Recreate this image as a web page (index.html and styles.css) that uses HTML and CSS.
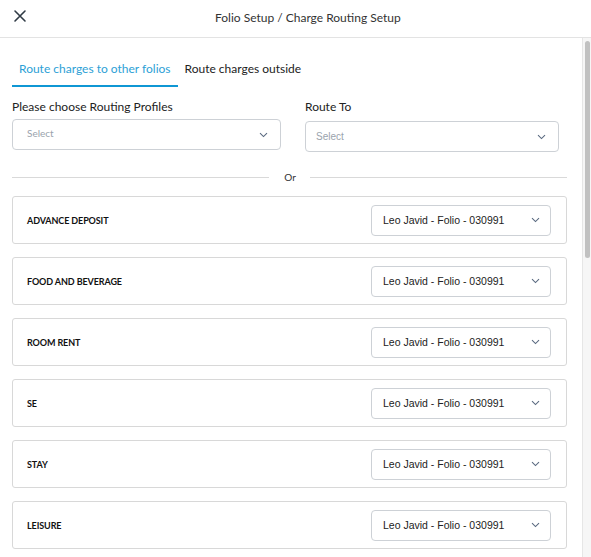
FILE: index.html
```html
<!DOCTYPE html>
<html>
<head>
<meta charset="utf-8">
<link rel="stylesheet" href="styles.css">
</head>
<body>
<div class="modal">
  <header class="header">
    <button class="close" aria-label="Close">
      <svg width="14" height="14" viewBox="0 0 14 14"><path d="M2 2 L12 12 M12 2 L2 12" stroke="#2f3a45" stroke-width="1.6" stroke-linecap="round"/></svg>
    </button>
    <div class="title">Folio Setup / Charge Routing Setup</div>
  </header>
  <div class="main">
    <main class="body">
      <nav class="tabs">
        <div class="tab active">Route charges to other folios</div>
        <div class="tab">Route charges outside</div>
      </nav>
      <div class="fields">
        <div class="field">
          <label class="label">Please choose Routing Profiles</label>
          <div class="select select-a"><span class="ph">Select</span><svg class="chev" width="9" height="6" viewBox="0 0 9 6"><path d="M1 1.2 L4.5 4.6 L8 1.2" fill="none" stroke="#5a6a80" stroke-width="1.1"/></svg></div>
        </div>
        <div class="field field-b">
          <label class="label">Route To</label>
          <div class="select select-b"><span class="ph ph-b">Select</span><svg class="chev" width="9" height="6" viewBox="0 0 9 6"><path d="M1 1.2 L4.5 4.6 L8 1.2" fill="none" stroke="#5a6a80" stroke-width="1.1"/></svg></div>
        </div>
      </div>
      <div class="or"><span class="line"></span><span class="or-text">Or</span><span class="line"></span></div>
      <div class="cards">
        <div class="card"><span class="cat">ADVANCE DEPOSIT</span><div class="folio"><span>Leo Javid - Folio - 030991</span><svg class="chev" width="9" height="6" viewBox="0 0 9 6"><path d="M1 1.2 L4.5 4.6 L8 1.2" fill="none" stroke="#5a6a80" stroke-width="1.1"/></svg></div></div>
        <div class="card"><span class="cat">FOOD AND BEVERAGE</span><div class="folio"><span>Leo Javid - Folio - 030991</span><svg class="chev" width="9" height="6" viewBox="0 0 9 6"><path d="M1 1.2 L4.5 4.6 L8 1.2" fill="none" stroke="#5a6a80" stroke-width="1.1"/></svg></div></div>
        <div class="card"><span class="cat">ROOM RENT</span><div class="folio"><span>Leo Javid - Folio - 030991</span><svg class="chev" width="9" height="6" viewBox="0 0 9 6"><path d="M1 1.2 L4.5 4.6 L8 1.2" fill="none" stroke="#5a6a80" stroke-width="1.1"/></svg></div></div>
        <div class="card"><span class="cat">SE</span><div class="folio"><span>Leo Javid - Folio - 030991</span><svg class="chev" width="9" height="6" viewBox="0 0 9 6"><path d="M1 1.2 L4.5 4.6 L8 1.2" fill="none" stroke="#5a6a80" stroke-width="1.1"/></svg></div></div>
        <div class="card"><span class="cat">STAY</span><div class="folio"><span>Leo Javid - Folio - 030991</span><svg class="chev" width="9" height="6" viewBox="0 0 9 6"><path d="M1 1.2 L4.5 4.6 L8 1.2" fill="none" stroke="#5a6a80" stroke-width="1.1"/></svg></div></div>
        <div class="card"><span class="cat">LEISURE</span><div class="folio"><span>Leo Javid - Folio - 030991</span><svg class="chev" width="9" height="6" viewBox="0 0 9 6"><path d="M1 1.2 L4.5 4.6 L8 1.2" fill="none" stroke="#5a6a80" stroke-width="1.1"/></svg></div></div>
      </div>
    </main>
    <div class="track"><div class="thumb"></div></div>
  </div>
</div>
</body>
</html>
```
FILE: styles.css
```css
* { box-sizing: border-box; }
html, body { margin: 0; padding: 0; }
body {
  font-family: Lato, "Liberation Sans", sans-serif;
  color: #222;
  background: #fff;
}
.modal {
  width: 591px;
  height: 557px;
  display: flex;
  flex-direction: column;
  overflow: hidden;
}
.header {
  height: 38px;
  flex: none;
  border-bottom: 1px solid #e3e3e3;
  display: flex;
  align-items: center;
}
.close {
  border: 0;
  background: none;
  padding: 0;
  margin-left: 13px;
  margin-top: -6px;
  width: 14px;
  height: 14px;
  display: flex;
}
.title {
  margin-left: 188px;
  margin-top: -2px;
  font-size: 12px;
  color: #333;
}
.main {
  flex: 1;
  display: flex;
  min-height: 0;
}
.body {
  flex: 1;
  overflow: hidden;
  padding: 14px 15px 0 12px;
}
.track {
  width: 9px;
  flex: none;
  background: #f6f6f6;
  border-left: 1px solid #e6e6e6;
  padding: 3px 1px 0 2px;
}
.thumb {
  height: 217px;
  background: #c1c1c1;
  border-radius: 3px;
}
.tabs {
  display: flex;
  height: 35px;
}
.tab {
  font-size: 12px;
  padding: 9px 7px 0 7px;
  color: #222;
  white-space: nowrap;
}
.tab.active {
  color: #2d9fd6;
  border-bottom: 2px solid #0f97d4;
}
.fields {
  display: flex;
  margin-top: 13px;
}
.field { display: flex; flex-direction: column; }
.field-b { margin-left: 24px; }
.label {
  font-size: 12px;
  color: #222;
  line-height: 14px;
  height: 14px;
}
.select {
  height: 31px;
  border: 1px solid #cdd1d6;
  border-radius: 4px;
  display: flex;
  align-items: center;
  justify-content: space-between;
  padding: 0 12px 0 14px;
}
.select-a { width: 269px; margin-top: 5px; }
.select-b { width: 254px; padding-left: 10px; margin-top: 7px; }
.ph {
  font-size: 10px;
  color: #9aa3ad;
  margin-top: -3px;
}
.ph-b { font-family: "Liberation Sans", Arial, sans-serif; margin-top: 0; }
.chev { flex: none; }
.or {
  display: flex;
  align-items: center;
  margin-top: 17px;
  height: 16px;
}
.or .line { flex: 1; height: 1px; background: #d9d9d9; }
.or-text { font-size: 10px; color: #333; padding: 0 14px 0 15px; }
.cards {
  display: flex;
  flex-direction: column;
  gap: 13px;
  margin-top: 11px;
}
.card {
  height: 48px;
  flex: none;
  border: 1px solid #d8d8d8;
  border-radius: 3px;
  display: flex;
  align-items: center;
  justify-content: space-between;
  padding: 0 15px 0 14px;
}
.cat {
  font-size: 9px;
  font-weight: 700;
  color: #111;
  letter-spacing: -0.1px;
}
.folio {
  width: 180px;
  height: 31px;
  border: 1px solid #cdd1d6;
  border-radius: 4px;
  display: flex;
  align-items: center;
  justify-content: space-between;
  padding: 0 10px 0 11px;
  font-family: "Liberation Sans", Arial, sans-serif;
  font-size: 10.5px;
  color: #222;
}
```
